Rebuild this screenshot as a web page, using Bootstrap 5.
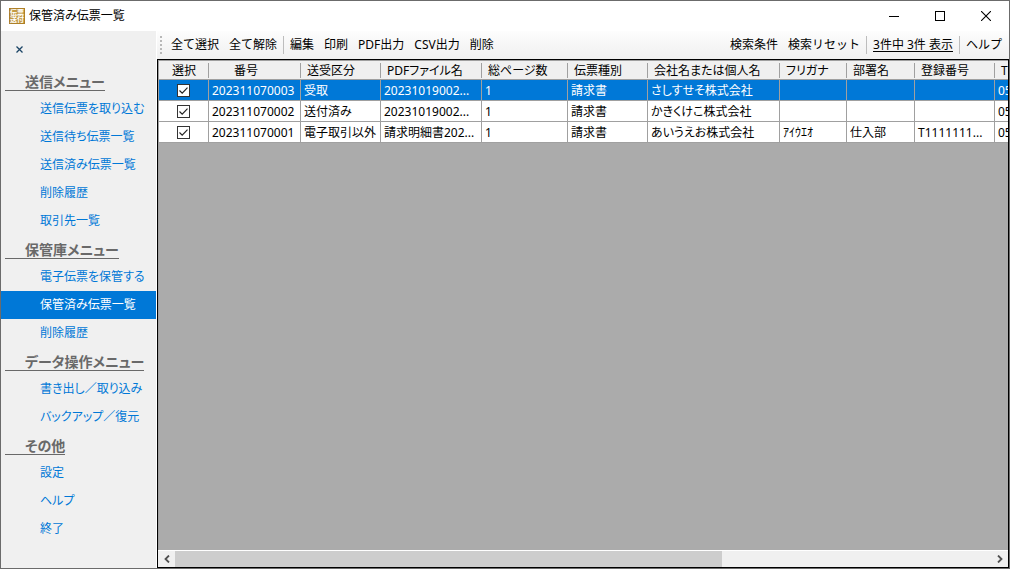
<!DOCTYPE html>
<html lang="ja">
<head>
<meta charset="utf-8">
<meta name="viewport" content="width=device-width, initial-scale=1">
<title>保管済み伝票一覧</title>
<link href="https://cdn.jsdelivr.net/npm/bootstrap@5.3.0/dist/css/bootstrap.min.css" rel="stylesheet">
<style>
  :root { --accent: #0078d7; --face: #f0f0f0; --line: #a0a0a0; }
  body { font: 12px/20px "Noto Sans", "Noto Sans CJK JP", sans-serif; font-feature-settings: "palt"; color: #000; background: var(--face); }
  .app-window { border: 1px solid #6b6b6b; }
  .titlebar { height: 30px; background: #fff; }
  .caption-btn { width: 46px; height: 30px; border: 0; background: transparent; padding: 0; display: flex; align-items: center; justify-content: center; }
  .side { width: 156px; border-right: 1px solid #fff; background: var(--face); }
  .side-close { border: 0; background: transparent; padding: 0; margin: 8px 0 8px 12px; width: 12px; height: 20px; display: flex; align-items: center; justify-content: center; }
  .side-head { height: 24px; margin: 0 0 4px 4px; padding-left: 20px; width: max-content; font-size: 14px; line-height: 30px; font-weight: 700; color: #696969; border-bottom: 1px solid #696969; }
  .side .nav-link { height: 28px; line-height: 28px; padding: 0 0 0 39px; color: var(--accent); border-radius: 0; white-space: nowrap; }
  .side .nav-link.active { background: var(--accent); color: #fff; }
  .toolbar { height: 28px; background: linear-gradient(#fdfdfd, #f0f0f0); padding: 0 2px 0 3px; }
  .tool-btn { border: 0; background: transparent; padding: 0 5px; line-height: 20px; color: #000; white-space: nowrap; }
  .tool-count { color: #000; padding: 0 5px; text-underline-offset: 2px; }
  .tool-sep { width: 1px; height: 18px; background: #bdbdbd; margin: 0 1px; }
  .grip { width: 2px; height: 18px; margin-right: 4px; background: repeating-linear-gradient(#b8b8b8 0 2px, transparent 2px 4px); }
  .grid-frame { border: 1px solid #000; background: #ababab; }
  .grid-view { overflow: hidden; border-left: 1px solid var(--line); border-top: 1px solid var(--line); }
  .slips { width: 916px; table-layout: fixed; border-collapse: separate; border-spacing: 0; }
  .slips th { height: 19px; padding: 2px 6px 0; font-weight: 400; line-height: 16px; background: linear-gradient(var(--line), var(--line)) right 2px / 1px 15px no-repeat var(--face); border-bottom: 1px solid var(--line); white-space: nowrap; }
  .slips td { height: 21px; padding: 2px 3px 0; line-height: 18px; background: #fff; border-right: 1px solid var(--line); border-bottom: 1px solid var(--line); white-space: nowrap; overflow: hidden; text-overflow: ellipsis; }
  .slips td.pick { padding-top: 0; }
  .slips .chosen td { background: var(--accent); color: #fff; }
  .slips .edge { text-overflow: clip; }
  .slips .num { padding-right: 24px; }
  .tick { appearance: none; display: block; margin: 0 auto; width: 13px; height: 13px; border: 1px solid #333; background: #fff; }
  .tick:checked { background: #fff url("data:image/svg+xml,%3Csvg xmlns='http://www.w3.org/2000/svg' viewBox='0 0 11 11'%3E%3Cpath d='M1.5 5.5l2.7 2.7 5.3-5.5' fill='none' stroke='%23222' stroke-width='1.2'/%3E%3C/svg%3E") center / 11px 11px no-repeat; }
  .hbar { height: 17px; border-top: 1px solid #fff; background: var(--face); }
  .hbar button { width: 17px; border: 0; background: transparent; padding: 0; display: flex; align-items: center; justify-content: center; }
  .hbar-thumb { width: 67%; background: #cdcdcd; }
</style>
</head>
<body>
<div class="app-window d-flex flex-column vh-100">
  <header class="titlebar d-flex align-items-center flex-shrink-0">
    <svg class="ms-2" width="16" height="16" viewBox="0 0 16 16" aria-hidden="true">
      <rect width="16" height="16" fill="#c39a45"/>
      <rect x=".5" y=".5" width="15" height="15" fill="none" stroke="#ad7f27"/>
      <g fill="#fff" font-size="7" font-weight="700"><text x="1" y="7">伝票</text><text x="1" y="14">送付</text></g>
    </svg>
    <span class="ps-1">保管済み伝票一覧</span>
    <div class="d-flex ms-auto">
      <button class="caption-btn" aria-label="最小化"><svg width="10" height="10"><path d="M0 5.500h10" stroke="#000"/></svg></button>
      <button class="caption-btn" aria-label="最大化"><svg width="10" height="10"><rect x=".5" y=".5" width="9" height="9" fill="none" stroke="#000"/></svg></button>
      <button class="caption-btn" aria-label="閉じる"><svg width="10" height="10"><path d="M0 0l10 10M10 0L0 10" stroke="#000" stroke-width="1.1"/></svg></button>
    </div>
  </header>

  <div class="d-flex flex-grow-1 overflow-hidden">
    <nav class="side flex-shrink-0">
      <button class="side-close" aria-label="メニューを閉じる"><svg width="7" height="7"><path d="M.5.5l6 6M6.500.5l-6 6" stroke="#1c4566" stroke-width="1.300"/></svg></button>
      <h2 class="side-head">送信メニュー</h2>
      <div class="nav flex-column">
        <a class="nav-link" href="#">送信伝票を取り込む</a>
        <a class="nav-link" href="#">送信待ち伝票一覧</a>
        <a class="nav-link" href="#">送信済み伝票一覧</a>
        <a class="nav-link" href="#">削除履歴</a>
        <a class="nav-link" href="#">取引先一覧</a>
      </div>
      <h2 class="side-head">保管庫メニュー</h2>
      <div class="nav flex-column">
        <a class="nav-link" href="#">電子伝票を保管する</a>
        <a class="nav-link active" href="#" aria-current="page">保管済み伝票一覧</a>
        <a class="nav-link" href="#">削除履歴</a>
      </div>
      <h2 class="side-head">データ操作メニュー</h2>
      <div class="nav flex-column">
        <a class="nav-link" href="#">書き出し／取り込み</a>
        <a class="nav-link" href="#">バックアップ／復元</a>
      </div>
      <h2 class="side-head">その他</h2>
      <div class="nav flex-column">
        <a class="nav-link" href="#">設定</a>
        <a class="nav-link" href="#">ヘルプ</a>
        <a class="nav-link" href="#">終了</a>
      </div>
    </nav>

    <main class="d-flex flex-column flex-grow-1 overflow-hidden">
      <div class="toolbar d-flex align-items-center flex-shrink-0">
        <span class="grip"></span>
        <button class="tool-btn">全て選択</button>
        <button class="tool-btn">全て解除</button>
        <span class="tool-sep"></span>
        <button class="tool-btn">編集</button>
        <button class="tool-btn">印刷</button>
        <button class="tool-btn">PDF出力</button>
        <button class="tool-btn">CSV出力</button>
        <button class="tool-btn">削除</button>
        <button class="tool-btn ms-auto">検索条件</button>
        <button class="tool-btn">検索リセット</button>
        <span class="tool-sep"></span>
        <a class="tool-count" href="#">3件中 3件 表示</a>
        <span class="tool-sep"></span>
        <button class="tool-btn">ヘルプ</button>
      </div>

      <div class="grid-frame d-flex flex-column flex-grow-1 overflow-hidden">
        <div class="grid-view flex-grow-1">
          <table class="slips">
            <colgroup>
              <col style="width:50px"><col style="width:92px"><col style="width:80px"><col style="width:101px"><col style="width:86px"><col style="width:80px"><col style="width:132px"><col style="width:67px"><col style="width:68px"><col style="width:80px"><col style="width:80px">
            </colgroup>
            <thead>
              <tr><th class="text-center">選択</th><th class="text-center num">番号</th><th>送受区分</th><th>PDFファイル名</th><th>総ページ数</th><th>伝票種別</th><th>会社名または個人名</th><th>フリガナ</th><th>部署名</th><th>登録番号</th><th>T</th></tr>
            </thead>
            <tbody>
              <tr class="chosen"><td class="pick"><input class="tick" type="checkbox" aria-label="202311070003を選択" checked></td><td>202311070003</td><td>受取</td><td>20231019002...</td><td>1</td><td>請求書</td><td>さしすせそ株式会社</td><td></td><td></td><td></td><td class="edge">05</td></tr>
              <tr><td class="pick"><input class="tick" type="checkbox" aria-label="202311070002を選択" checked></td><td>202311070002</td><td>送付済み</td><td>20231019002...</td><td>1</td><td>請求書</td><td>かきくけこ株式会社</td><td></td><td></td><td></td><td class="edge">05</td></tr>
              <tr><td class="pick"><input class="tick" type="checkbox" aria-label="202311070001を選択" checked></td><td>202311070001</td><td>電子取引以外</td><td>請求明細書202...</td><td>1</td><td>請求書</td><td>あいうえお株式会社</td><td>ｱｲｳｴｵ</td><td>仕入部</td><td>T1111111...</td><td class="edge">05</td></tr>
            </tbody>
          </table>
        </div>
        <div class="hbar d-flex flex-shrink-0">
          <button aria-label="左へ"><svg width="6" height="8"><path d="M5 .5L1.500 4 5 7.500" fill="none" stroke="#505050" stroke-width="1.800"/></svg></button>
          <div class="flex-grow-1 d-flex"><div class="hbar-thumb"></div></div>
          <button aria-label="右へ"><svg width="6" height="8"><path d="M1 .5L4.500 4 1 7.500" fill="none" stroke="#505050" stroke-width="1.800"/></svg></button>
        </div>
      </div>
    </main>
  </div>
</div>
<script src="https://cdn.jsdelivr.net/npm/bootstrap@5.3.0/dist/js/bootstrap.bundle.min.js"></script>
</body>
</html>
